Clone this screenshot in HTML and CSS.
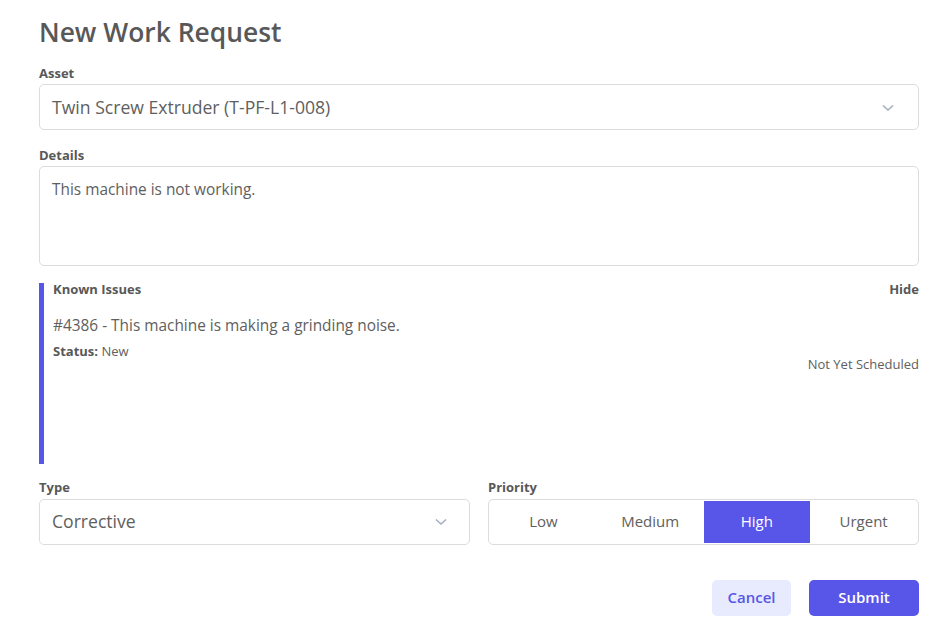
FILE: index.html
```html
<!DOCTYPE html>
<html lang="en">
<head>
    <meta charset="UTF-8">
    <meta name="viewport" content="width=device-width, initial-scale=1.0">
    <title>New Work Request</title>
    <link rel="stylesheet" href="styles.css">
</head>
<body>
    <main class="request">
        <h1>New Work Request</h1>

        <label class="field-label">Asset</label>
        <div class="select-box">
            <span>Twin Screw Extruder (T-PF-L1-008)</span>
            <svg class="chevron" width="12" height="8" viewBox="0 0 12 8"><polyline points="1,1.5 6,6 11,1.5" fill="none" stroke="#a3adbf" stroke-width="1.5"/></svg>
        </div>

        <label class="field-label">Details</label>
        <div class="textarea">This machine is not working.</div>

        <section class="known-issues">
            <div class="issues-head">
                <span>Known Issues</span>
                <span>Hide</span>
            </div>
            <div class="issue">
                <div class="issue-main">
                    <p class="issue-title">#4386 - This machine is making a grinding noise.</p>
                    <p class="issue-status"><b>Status:</b> New</p>
                </div>
                <p class="issue-schedule">Not Yet Scheduled</p>
            </div>
        </section>

        <div class="row">
            <div class="col">
                <label class="field-label">Type</label>
                <div class="select-box">
                    <span>Corrective</span>
                    <svg class="chevron" width="12" height="8" viewBox="0 0 12 8"><polyline points="1,1.5 6,6 11,1.5" fill="none" stroke="#a3adbf" stroke-width="1.5"/></svg>
                </div>
            </div>
            <div class="col">
                <label class="field-label">Priority</label>
                <div class="segmented">
                    <button class="segment">Low</button>
                    <button class="segment">Medium</button>
                    <button class="segment active">High</button>
                    <button class="segment">Urgent</button>
                </div>
            </div>
        </div>

        <div class="actions">
            <button class="btn btn-cancel">Cancel</button>
            <button class="btn btn-submit">Submit</button>
        </div>
    </main>
</body>
</html>
```

FILE: styles.css
```css
:root {
    --accent: #5856e8;
    --text: #606060;
    --heading: #585858;
    --border: #dcdcdc;
}

* {
    margin: 0;
    padding: 0;
    box-sizing: border-box;
}

body {
    font-family: 'Open Sans', 'Noto Sans', sans-serif;
    color: var(--text);
    background-color: white;
}

.request {
    width: 880px;
    margin-left: 39px;
    padding-top: 14px;
}

h1 {
    font-size: 26.4px;
    font-weight: 600;
    line-height: 36px;
    color: var(--heading);
    margin-bottom: 15px;
}

.field-label {
    display: block;
    font-size: 13px;
    font-weight: 700;
    line-height: 16px;
    color: var(--heading);
    margin-bottom: 3px;
}

.select-box {
    display: flex;
    justify-content: space-between;
    align-items: center;
    height: 46px;
    border: 1px solid var(--border);
    border-radius: 5px;
    padding: 0 24px 0 12px;
    font-size: 17.6px;
    margin-bottom: 17px;
}

.chevron {
    margin-top: 1px;
}

.textarea {
    height: 100px;
    border: 1px solid var(--border);
    border-radius: 5px;
    padding: 12px 12px;
    font-size: 15.4px;
    line-height: 22px;
}

.known-issues {
    margin-top: 17px;
    height: 181px;
    border-left: 5px solid var(--accent);
    padding-left: 9px;
}

.issues-head {
    display: flex;
    justify-content: space-between;
    font-size: 13px;
    font-weight: 700;
    line-height: 12px;
    color: var(--heading);
}

.issue {
    display: flex;
    justify-content: space-between;
    margin-top: 21px;
}

.issue-title {
    font-size: 15.4px;
    line-height: 20px;
}

.issue-status {
    font-size: 13px;
    line-height: 16px;
    margin-top: 7px;
}

.issue-status b {
    color: var(--heading);
}

.issue-schedule {
    font-size: 13px;
    line-height: 16px;
    padding-top: 40px;
}

.row {
    display: grid;
    grid-template-columns: 1fr 1fr;
    gap: 18px;
    margin-top: 15px;
}

.row .field-label {
    margin-bottom: 4px;
}

.row .select-box {
    margin-bottom: 0;
    padding: 0 22px 2px 12px;
}

.segmented {
    display: flex;
    height: 46px;
    border: 1px solid var(--border);
    border-radius: 5px;
    padding: 1px;
}

.segment {
    flex: 1;
    border: none;
    background: none;
    padding-bottom: 2px;
    font-family: inherit;
    font-size: 15px;
    color: var(--text);
}

.segment.active {
    background-color: var(--accent);
    color: white;
}

.actions {
    display: flex;
    justify-content: flex-end;
    gap: 18px;
    margin-top: 35px;
}

.btn {
    height: 36px;
    border: none;
    border-radius: 5px;
    padding-bottom: 2px;
    font-family: inherit;
    font-size: 15px;
    font-weight: 600;
    cursor: pointer;
}

.btn-cancel {
    width: 79px;
    background-color: #e7ebfd;
    color: var(--accent);
}

.btn-submit {
    width: 110px;
    background-color: var(--accent);
    color: white;
}
```
